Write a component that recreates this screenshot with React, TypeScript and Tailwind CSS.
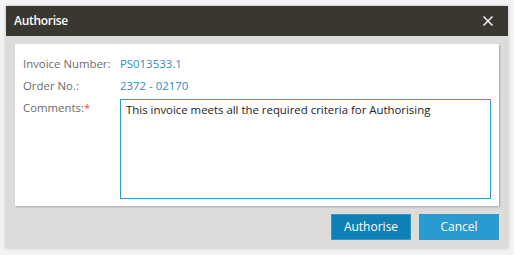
import React from "react";

const font = { fontFamily: '"Open Sans", "Noto Sans", sans-serif' };

const Row: React.FC<{ label: React.ReactNode; children: React.ReactNode }> = ({
  label,
  children,
}) => (
  <div className="flex items-start">
    <div className="w-[97px] shrink-0 text-[#6b6b6b]">{label}</div>
    <div className="flex-1">{children}</div>
  </div>
);

export default function App() {
  return (
    <div
      className="w-[514px] h-[255px] bg-[#f3f3f3] p-[6px] text-[11.4px]"
      style={font}
    >
      <div className="w-[502px] h-[242px] bg-[#dcdcdc] flex flex-col shadow-[0_0_3px_rgba(0,0,0,0.25)]">
        <div className="h-[30px] bg-[#3a3730] flex items-center justify-between pl-[8px] pr-[15px]">
          <span className="text-white text-[12px] font-semibold tracking-[-0.3px]">
            Authorise
          </span>
          <svg width="10" height="10" viewBox="0 0 10 10">
            <path
              d="M1 1 L9 9 M9 1 L1 9"
              stroke="#fff"
              strokeWidth="1.4"
              strokeLinecap="square"
            />
          </svg>
        </div>
        <div className="px-[9px] pt-[8px]">
          <div className="bg-white h-[162px] shadow-[1px_1px_2px_rgba(0,0,0,0.25)] pl-[8px] pr-[8px] pt-[11px] flex flex-col gap-[4px] leading-[18px]">
            <Row label="Invoice Number:">
              <span className="text-[#2a8fc6]">PS013533.1</span>
            </Row>
            <Row label="Order No.:">
              <span className="text-[#2a8fc6]">2372 - 02170</span>
            </Row>
            <Row
              label={
                <span>
                  Comments:<span className="text-[#e05050]">*</span>
                </span>
              }
            >
              <textarea
                className="block w-[371px] h-[100px] border border-[#2a9bd0] resize-none outline-none px-[5px] py-[1px] text-[11.4px] text-[#222] leading-[18px]"
                style={font}
                defaultValue="This invoice meets all the required criteria for Authorising"
              />
            </Row>
          </div>
        </div>
        <div className="flex justify-end gap-[8px] pr-[9px] pt-[8px]">
          <button className="w-[80px] h-[26px] bg-[#0e80b6] border border-[#2a9bd0] text-white text-[12px]">
            Authorise
          </button>
          <button className="w-[80px] h-[26px] bg-[#2a9bd0] text-white text-[12px]">
            Cancel
          </button>
        </div>
      </div>
    </div>
  );
}
